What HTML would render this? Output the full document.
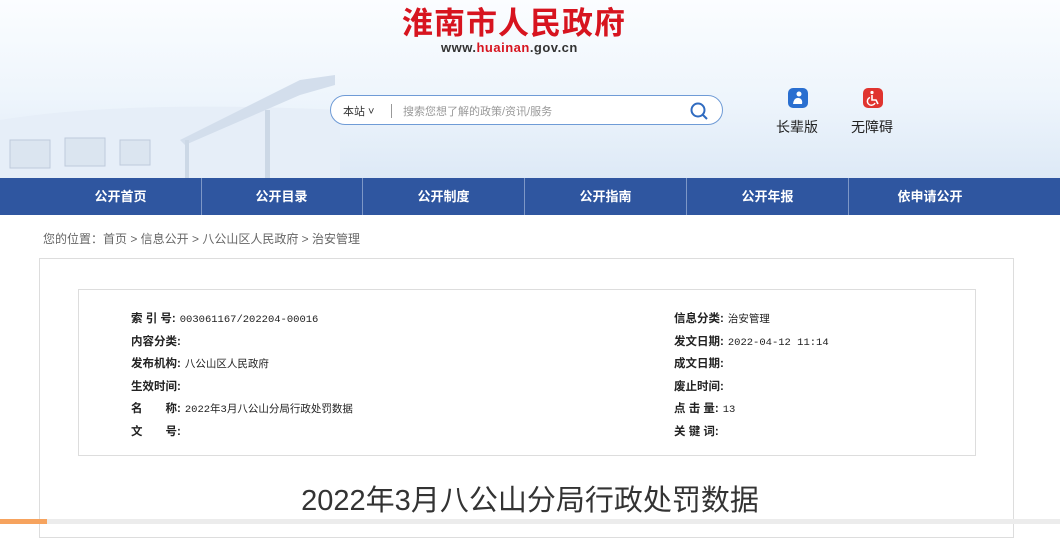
<!DOCTYPE html>
<html><head><meta charset="utf-8"><style>
*{margin:0;padding:0;box-sizing:border-box}
body{width:1060px;height:524px;overflow:hidden;background:#fff;font-family:"Liberation Sans","Noto Sans CJK SC",sans-serif;position:relative}
.hd{position:absolute;left:0;top:0;width:1060px;height:178px;background:linear-gradient(180deg,#fbfdff 0%,#eef5fc 55%,#dde9f6 100%)}
.logo{position:absolute;left:402px;top:2px;font-size:31px;line-height:38px;font-weight:bold;color:#d7141f;letter-spacing:1px;font-family:"Noto Sans CJK SC",sans-serif}
.url{position:absolute;left:441px;top:40px;font-size:13px;line-height:16px;font-weight:bold;color:#333;letter-spacing:.5px}
.url b{color:#d7141f}
.search{position:absolute;left:330px;top:95px;width:393px;height:30px;border:1px solid #6f9bd6;border-radius:15px;background:#fff}
.search .s1{position:absolute;left:12px;top:7px;font-size:11px;color:#333}
.search .bar{position:absolute;left:60px;top:8px;width:1px;height:14px;background:#999}
.search .ph{position:absolute;left:72px;top:7px;font-size:11px;color:#999}
.ic{position:absolute;top:88px;width:20px;height:20px;border-radius:5px}
.lbl{position:absolute;top:117px;font-size:14px;color:#222}
.nav{position:absolute;left:0;top:178px;width:1060px;height:37px;background:#2f56a0}
.nav div{position:absolute;top:0;width:162px;height:37px;line-height:37px;text-align:center;color:#fff;font-size:13px;font-weight:bold;border-right:1px solid #7d97c7}
.bc{position:absolute;left:43px;top:230px;font-size:12px;color:#666}
.box{position:absolute;left:39px;top:258px;width:975px;height:280px;border:1px solid #ddd}
.meta{position:absolute;left:78px;top:289px;width:898px;height:167px;border:1px solid #ddd}
.r{position:absolute;font-size:11px;color:#222;white-space:nowrap}
.r b{font-weight:bold;font-size:11.5px;margin-right:4px}
.r span{font-family:"Liberation Mono","Noto Sans CJK SC",monospace;font-size:10.5px}
.title{position:absolute;left:0;width:1060px;top:477px;text-align:center;font-size:29px;color:#333}
.foot{position:absolute;left:0;top:519px;width:1060px;height:5px;background:#ececec}
</style></head><body>
<div class="hd">
<svg width="340" height="178" style="position:absolute;left:0;top:0" viewBox="0 0 340 178">
<path d="M0 120 Q120 100 340 110 L340 178 L0 178Z" fill="#e6eef8"/>
<path d="M180 140 L300 80 L335 75 L335 85 L300 95 L185 145Z" fill="#d3deec"/>
<rect x="265" y="110" width="5" height="68" fill="#ccd8e6"/>
<rect x="185" y="140" width="4" height="38" fill="#ccd8e6"/>
<g fill="#dbe5f0" stroke="#bfcadb"><rect x="10" y="140" width="40" height="28"/><rect x="65" y="138" width="40" height="28"/><rect x="120" y="140" width="30" height="25"/></g>
</svg>
<div class="logo">淮南市人民政府</div>
<div class="url">www.<b>huainan</b>.gov.cn</div>
<div class="search"><div class="s1">本站 ˅</div><div class="bar"></div><div class="ph">搜索您想了解的政策/资讯/服务</div>
<svg style="position:absolute;left:358px;top:5px" width="20" height="20"><circle cx="9" cy="9" r="6.5" fill="none" stroke="#2f6bc0" stroke-width="2"/><path d="M14 14 L18 18" stroke="#2f6bc0" stroke-width="2"/></svg></div>
<div class="ic" style="left:788px;background:#2a6fd0"><svg width="20" height="20"><circle cx="11" cy="6" r="2.5" fill="#fff"/><path d="M5 16 Q6 9 11 10 Q15 11 14 16Z" fill="#fff"/></svg></div>
<div class="ic" style="left:863px;background:#e0342f"><svg width="20" height="20"><circle cx="9" cy="4.5" r="1.6" fill="#fff"/><path d="M9 7 V12 H13 L15 16" fill="none" stroke="#fff" stroke-width="1.6"/><path d="M7 9.5 A4 4 0 1 0 12 15" fill="none" stroke="#fff" stroke-width="1.4"/></svg></div>
<div class="lbl" style="left:776px">长辈版</div>
<div class="lbl" style="left:851px">无障碍</div>
</div>
<div class="nav">
<div style="left:40px">公开首页</div><div style="left:201px">公开目录</div><div style="left:363px">公开制度</div><div style="left:525px">公开指南</div><div style="left:687px">公开年报</div><div style="left:849px;border:none">依申请公开</div>
</div>
<div class="bc">您的位置：首页 &gt; 信息公开 &gt; 八公山区人民政府 &gt; 治安管理</div>
<div class="box"></div>
<div class="meta"></div>
<div class="r" style="left:131px;top:310px"><b>索 引 号:</b><span>003061167/202204-00016</span></div>
<div class="r" style="left:131px;top:333px"><b>内容分类:</b></div>
<div class="r" style="left:131px;top:355px"><b>发布机构:</b><span>八公山区人民政府</span></div>
<div class="r" style="left:131px;top:378px"><b>生效时间:</b></div>
<div class="r" style="left:131px;top:400px"><b>名　　称:</b><span>2022年3月八公山分局行政处罚数据</span></div>
<div class="r" style="left:131px;top:423px"><b>文　　号:</b></div>
<div class="r" style="left:674px;top:310px"><b>信息分类:</b><span>治安管理</span></div>
<div class="r" style="left:674px;top:333px"><b>发文日期:</b><span>2022-04-12 11:14</span></div>
<div class="r" style="left:674px;top:355px"><b>成文日期:</b></div>
<div class="r" style="left:674px;top:378px"><b>废止时间:</b></div>
<div class="r" style="left:674px;top:400px"><b>点 击 量:</b><span>13</span></div>
<div class="r" style="left:674px;top:423px"><b>关 键 词:</b></div>
<div class="title">2022年3月八公山分局行政处罚数据</div>
<div class="foot"><div style="width:47px;height:5px;background:#f6a35e"></div></div>
</body></html>
